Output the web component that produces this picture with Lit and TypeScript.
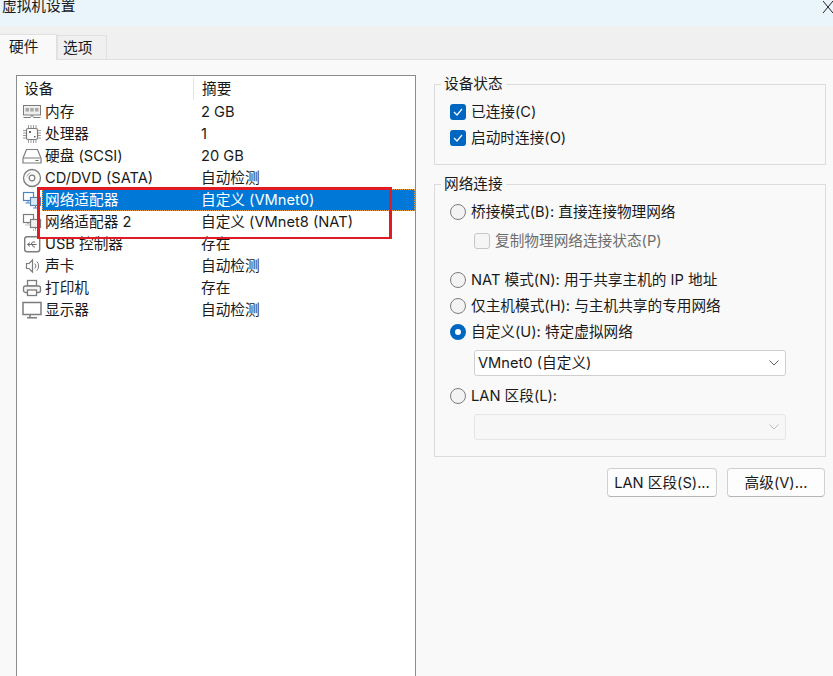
import { LitElement, html, css, svg } from "lit";
import { customElement } from "lit/decorators.js";

const G = "#7c7c7c";
const icons: Record<string, unknown> = {
  mem: svg`<rect x="1.500" y="3.500" width="17" height="9.500" fill="#efefef" stroke="${G}"/><path d="M3.500 6h3.500v3.500H3.500zM8.200 6h3.500v3.500H8.200zM13 6h3.500v3.500H13z" fill="#a8a8a8"/><path d="M1.500 15.500h7l1-2h1l1 2h7" fill="none" stroke="${G}"/>`,
  cpu: svg`<rect x="4.500" y="4.500" width="11" height="11" rx="1.500" fill="#fff" stroke="${G}" stroke-width="1.200"/><path d="M6.500 1v3M9 1v3M11.500 1v3M14 1v3M6.500 16v3M9 16v3M11.500 16v3M14 16v3M1 6.500h3M1 9h3M1 11.500h3M1 14h3M16 6.500h3M16 9h3M16 11.500h3M16 14h3" stroke="#9a9a9a"/><path d="M7 7h2v2H7zM12 12h1.500v1.500H12z" fill="#666"/>`,
  disk: svg`<path d="M4.500 3.500h11l3.500 8.500v5H1v-5z" fill="#fff" stroke="${G}" stroke-width="1.200"/><path d="M1.500 12h17" stroke="${G}"/><path d="M13.500 14.500h3" stroke="#666"/>`,
  cd: svg`<circle cx="10" cy="10" r="8.500" fill="#f8f8f8" stroke="${G}" stroke-width="1.300"/><circle cx="10" cy="10" r="2.800" fill="#fff" stroke="${G}" stroke-width="1.200"/><path d="M4.800 8.500a5.500 5.500 0 0 1 3.700-3.700" fill="none" stroke="#aaa"/>`,
  net: svg`<rect x="1.500" y="2.500" width="10" height="8" fill="#fff" stroke="#4a86c5" stroke-width="1.200"/><rect x="8.500" y="7.500" width="10" height="8" fill="#d7e9f7" stroke="#5f83a8" stroke-width="1.200"/><path d="M3.500 13h5M6 11v2M11 18h5M13.500 16v2" stroke="#4a86c5"/>`,
  net2: svg`<rect x="1.500" y="2.500" width="10" height="8" fill="#fff" stroke="${G}" stroke-width="1.200"/><rect x="8.500" y="7.500" width="10" height="8" fill="#eee" stroke="${G}" stroke-width="1.200"/><path d="M3.500 13h5M6 11v2M11 18h5M13.500 16v2" stroke="${G}" stroke-dasharray="1 1"/>`,
  usb: svg`<rect x="2.700" y="2.700" width="15" height="15" rx="2.500" fill="#fff" stroke="${G}" stroke-width="1.400"/><path d="M5.500 10.500h9M5.500 10.500l2.500-2M5.500 10.500l2.500 2M9 10.500l1.500-2.500h2.500M10 10.500l1.500 2.500h1.500" fill="none" stroke="#6a6a6a"/>`,
  snd: svg`<path d="M4.500 7.500h2.500l3.500-3.500v12l-3.500-3.500H4.500z" fill="#fff" stroke="${G}" stroke-width="1.200"/><path d="M12.800 7.500a3.500 3.500 0 0 1 0 5M14.800 5.500a6.500 6.500 0 0 1 0 9" fill="none" stroke="${G}"/>`,
  prn: svg`<rect x="5.500" y="2.500" width="9" height="5.500" fill="#fff" stroke="${G}" stroke-width="1.300"/><rect x="1.500" y="8" width="17" height="6.500" rx="2" fill="#f4f4f4" stroke="${G}" stroke-width="1.300"/><rect x="5.500" y="12" width="9" height="5.500" fill="#fff" stroke="${G}" stroke-width="1.300"/>`,
  mon: svg`<rect x="1" y="2.500" width="18" height="12" fill="#fff" stroke="${G}" stroke-width="1.500"/><path d="M8 15v2M5 17.800h10" stroke="${G}" stroke-width="1.500"/>`,
};

const rows: [string, string, string][] = [
  ["mem", "内存", "2 GB"],
  ["cpu", "处理器", "1"],
  ["disk", "硬盘 (SCSI)", "20 GB"],
  ["cd", "CD/DVD (SATA)", "自动检测"],
  ["net", "网络适配器", "自定义 (VMnet0)"],
  ["net2", "网络适配器 2", "自定义 (VMnet8 (NAT)"],
  ["usb", "USB 控制器", "存在"],
  ["snd", "声卡", "自动检测"],
  ["prn", "打印机", "存在"],
  ["mon", "显示器", "自动检测"],
];

const chevron = html`<svg class="chev" width="10" height="6" viewBox="0 0 10 6"><path d="M.5.500 5 5 9.500.500" fill="none" stroke="currentColor"/></svg>`;
const tick = html`<svg width="10" height="8" viewBox="0 0 10 8"><path d="M1 4l3 3 5-6" fill="none" stroke="#fff" stroke-width="1.200"/></svg>`;

@customElement("app-root")
export class AppRoot extends LitElement {
  static styles = css`
    :host {
      display: block;
      width: 833px;
      height: 676px;
      overflow: hidden;
      position: relative;
      background: #f9f9f9;
      color: #1a1a1a;
      font: 14.67px/22px Inter, "Noto Sans CJK SC", sans-serif;
    }
    .title {
      height: 26px;
      background: #eaf4fb;
      display: flex;
      justify-content: space-between;
      overflow: hidden;
      padding-left: 2px;
    }
    .title span { line-height: 12px; }
    .title svg { margin-top: 1px; }
    .tabs {
      height: 34px;
      box-sizing: border-box;
      background: #f0f0f0;
      border-bottom: 1px solid #dedede;
      display: flex;
      align-items: flex-end;
    }
    .tab {
      box-sizing: border-box;
      height: 24px;
      width: 50px;
      border: 1px solid #e0e0e0;
      border-bottom: none;
      padding-left: 5px;
      line-height: 25px;
    }
    .tab.on {
      width: 57px;
      height: 26px;
      background: #f9f9f9;
      margin-bottom: -1px;
      border-left: none;
      padding-left: 9px;
      line-height: 24px;
    }
    .body {
      display: flex;
      gap: 18px;
      padding: 15px 0 0 16px;
      align-items: flex-start;
    }
    .list {
      width: 400px;
      height: 640px;
      box-sizing: border-box;
      flex: none;
      border: 1px solid #8c8c8c;
      background: #fff;
    }
    .head, .row {
      display: grid;
      grid-template-columns: 177px 1fr;
      height: 22px;
    }
    .head { height: 25px; padding-top: 2px; box-sizing: border-box; }
    .head span:first-child { padding-left: 7px; border-right: 1px solid #e5e5e5; margin-bottom: 1px; }
    .head span:last-child { padding-left: 8px; }
    .name { display: flex; align-items: center; gap: 2px; padding-left: 5px; white-space: nowrap; }
    .name svg { flex: none; }
    .name span { padding: 0 1px; }
    .val { padding-left: 7px; white-space: nowrap; }
    .row { position: relative; }
    .row.sel { background: linear-gradient(90deg, #fff 25px, #0078d7 25px); }
    .row.sel::after {
      content: "";
      position: absolute;
      inset: 0 0 0 25px;
      border: 1px dotted #f0a040;
    }
    .row.sel .name span { color: #fff; }
    .row.sel .val { color: #fff; }
    .side { width: 392px; flex: none; display: flex; flex-direction: column; }
    fieldset {
      margin: 0;
      padding: 0 15px;
      border: 1px solid #dcdcdc;
      min-width: 0;
      display: flex;
      flex-direction: column;
      box-sizing: border-box;
    }
    legend { padding: 0 3px; margin-left: -9px; line-height: 18px; }
    .g1 { height: 90px; padding-top: 6px; }
    .g2 { height: 282px; margin-top: 10px; padding-top: 6px; }
    .opt { display: flex; align-items: center; gap: 5px; height: 26px; white-space: nowrap; }
    .sub { margin: 3px 0 0 24px; }
    .muted { color: #6d6d6d; }
    .box {
      width: 16px; height: 16px; box-sizing: border-box; border-radius: 3px; flex: none;
      display: flex; align-items: center; justify-content: center;
    }
    .box.on { background: #0067c0; }
    .box.off { border: 1px solid #c6c6c6; background: #f5f5f5; }
    .radio {
      width: 16px; height: 16px; box-sizing: border-box; border-radius: 50%; flex: none;
      border: 1px solid #7d7d7d; background: #f3f3f3;
    }
    .radio.on { border: 5px solid #0067c0; background: #fff; }
    .gap-a { margin-top: 13px; }
    .sel-box {
      margin: 5px 0 7px 24px;
      width: 312px;
      height: 26px;
      box-sizing: border-box;
      border: 1px solid #cfcfcf;
      border-radius: 3px;
      background: #fff;
      display: flex;
      align-items: center;
      justify-content: space-between;
      padding: 0 6px 0 3px;
      color: #1a1a1a;
      flex: none;
    }
    .sel-box .chev { color: #606060; }
    .sel-box.off { background: #f7f7f7; border-color: #e6e6e6; color: #bbb; }
    .sel-box.off .chev { color: #bbb; }
    .btns { display: flex; justify-content: flex-end; gap: 10px; margin-top: 11px; padding-right: 1px; }
    button {
      font: inherit; color: inherit;
      height: 29px; box-sizing: border-box; padding: 0;
      background: #fdfdfd; border: 1px solid #d0d0d0; border-bottom-color: #b5b5b5; border-radius: 4px;
    }
    .b1 { width: 110px; }
    .b2 { width: 98px; }
    .mark {
      position: absolute;
      left: 37px; top: 187px;
      width: 355px; height: 52px;
      box-sizing: border-box;
      border: 3px solid #e21a24;
      border-bottom-width: 2px;
      pointer-events: none;
    }
  `;

  private opt(kind: string, text: string, cls = "") {
    return html`<div class="opt ${cls}"><span class=${kind}>${kind === "box on" ? tick : ""}</span><span>${text}</span></div>`;
  }

  render() {
    return html`
      <div class="title">
        <span>虚拟机设置</span>
        <svg width="10" height="12" viewBox="0 0 10 12"><path d="M0 0l10 12M10 0L0 12" stroke="#222" fill="none"/></svg>
      </div>
      <div class="tabs">
        <div class="tab on">硬件</div>
        <div class="tab">选项</div>
      </div>
      <div class="body">
        <div class="list">
          <div class="head"><span>设备</span><span>摘要</span></div>
          ${rows.map(
            ([ic, n, v], i) => html`<div class="row ${i === 4 ? "sel" : ""}">
              <div class="name"><svg width="20" height="20" viewBox="0 0 20 20">${icons[ic]}</svg><span>${n}</span></div>
              <div class="val">${v}</div>
            </div>`
          )}
        </div>
        <div class="side">
          <fieldset class="g1">
            <legend>设备状态</legend>
            ${this.opt("box on", "已连接(C)")}
            ${this.opt("box on", "启动时连接(O)")}
          </fieldset>
          <fieldset class="g2">
            <legend>网络连接</legend>
            ${this.opt("radio", "桥接模式(B): 直接连接物理网络")}
            ${this.opt("box off", "复制物理网络连接状态(P)", "sub muted")}
            ${this.opt("radio", "NAT 模式(N): 用于共享主机的 IP 地址", "gap-a")}
            ${this.opt("radio", "仅主机模式(H): 与主机共享的专用网络")}
            ${this.opt("radio on", "自定义(U): 特定虚拟网络")}
            <div class="sel-box"><span>VMnet0 (自定义)</span>${chevron}</div>
            ${this.opt("radio", "LAN 区段(L):")}
            <div class="sel-box off"><span></span>${chevron}</div>
          </fieldset>
          <div class="btns">
            <button class="b1">LAN 区段(S)...</button>
            <button class="b2">高级(V)...</button>
          </div>
        </div>
      </div>
      <div class="mark"></div>
    `;
  }
}
